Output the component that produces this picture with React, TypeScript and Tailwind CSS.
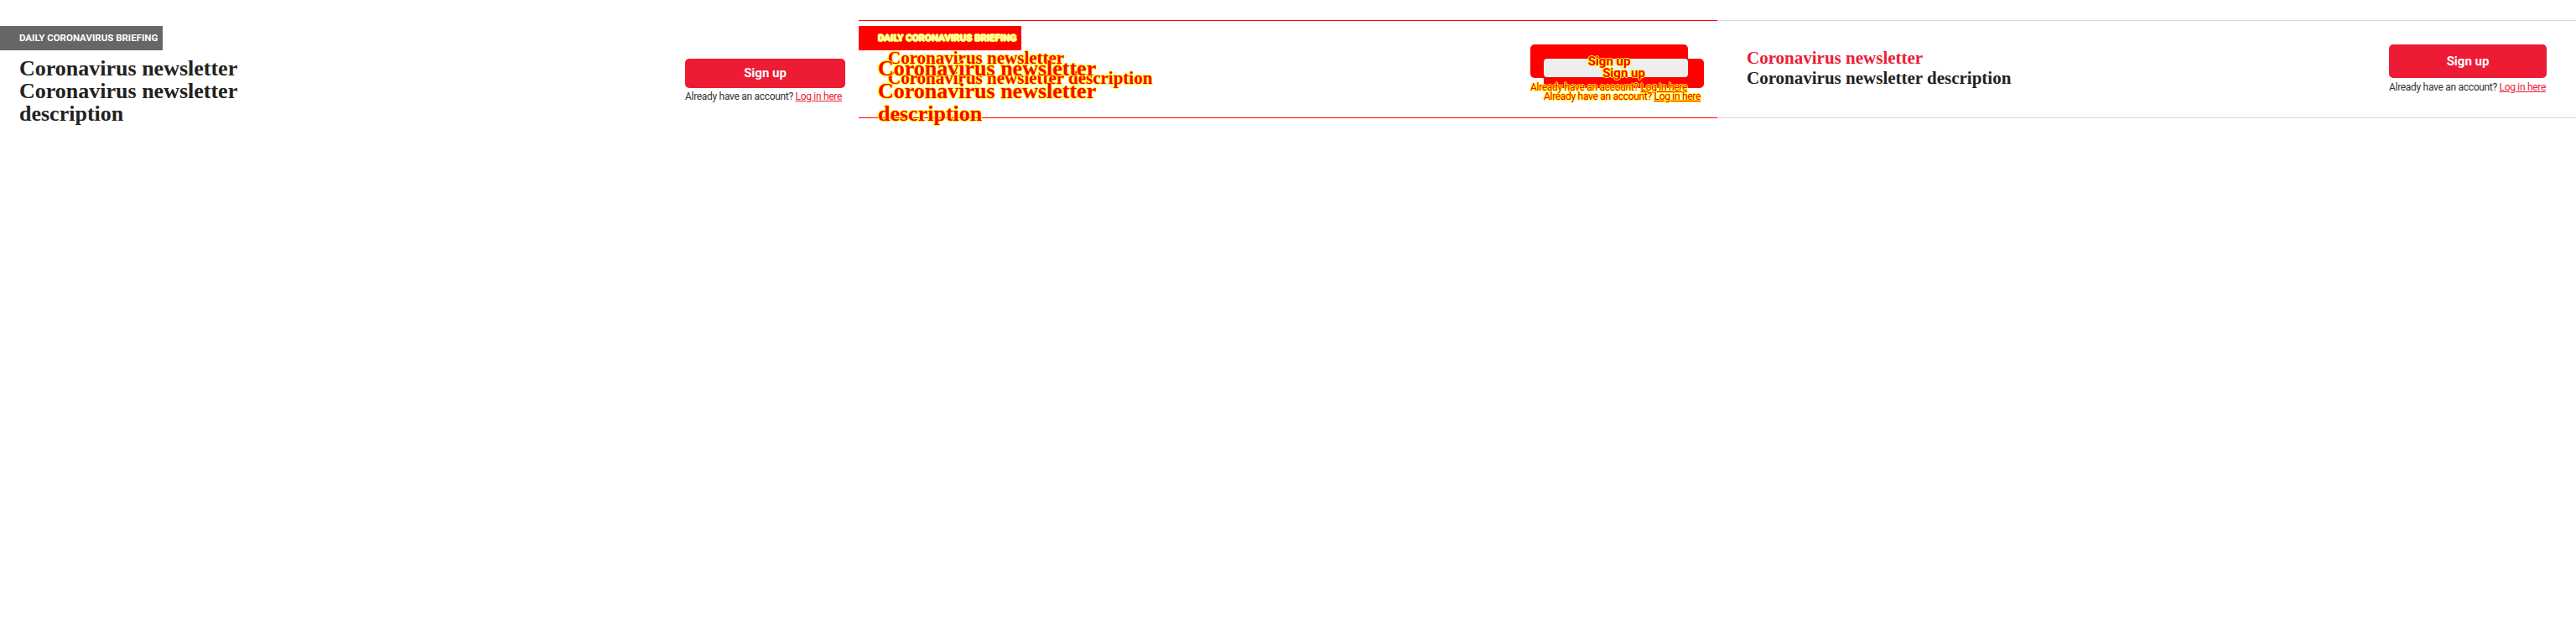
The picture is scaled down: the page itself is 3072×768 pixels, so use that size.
import React from "react";

const SERIF = "font-['Liberation_Serif',serif]";
const SANS = "font-['Roboto',sans-serif]";
const DIFF_TEXT =
  "relative z-10 text-[#ff0000] [text-shadow:1px_0_0_#ffff00,-1px_0_0_#ffff00,0_1px_0_#ffff00,0_-1px_0_#ffff00]";
const DIFF_WHITE_TEXT =
  "relative z-10 text-white [text-shadow:1px_0_0_#ffff00,-1px_0_0_#ffff00,0_1px_0_#ffff00,0_-1px_0_#ffff00]";

function Expected({ diff = false }: { diff?: boolean }) {
  return (
    <div className="w-[1024px]">
      <div
        className={
          "mt-[31px] flex h-[29px] w-[194px] items-center pl-[23px] " +
          (diff ? "bg-[#ff0000]" : "bg-[#666666]")
        }
      >
        <span
          className={
            SANS +
            " whitespace-nowrap text-[11.5px] font-bold uppercase " +
            (diff ? DIFF_WHITE_TEXT : "text-white")
          }
        >
          Daily Coronavirus Briefing
        </span>
      </div>
      <div className="mt-[8px] flex justify-between pl-[23px] pr-[16px]">
        <h2
          className={
            SERIF +
            " max-w-[300px] text-[26px] font-bold leading-[27px] " +
            (diff ? DIFF_TEXT : "text-[#222222]")
          }
        >
          Coronavirus newsletter Coronavirus newsletter description
        </h2>
        <div className="mt-[2px] w-[191px]">
          <div
            className={
              "flex h-[35px] w-full items-center justify-center rounded-[5px] " +
              (diff ? "bg-[#ff0000]" : "bg-[#ed1b33]")
            }
          >
            <span
              className={
                SANS +
                " text-[15px] font-bold " +
                (diff ? DIFF_TEXT : "text-white")
              }
            >
              Sign up
            </span>
          </div>
          <p
            className={
              SANS +
              " mt-[2px] whitespace-nowrap text-[12px] leading-[16px] tracking-[-0.3px] " +
              (diff ? DIFF_TEXT : "text-[#333333]")
            }
          >
            Already have an account?{" "}
            <a className={"underline " + (diff ? "" : "text-[#ed1b33]")}>
              Log in here
            </a>
          </p>
        </div>
      </div>
    </div>
  );
}

function Actual({ diff = false }: { diff?: boolean }) {
  return (
    <div className="w-[1024px]">
      <div
        className={
          "mt-[24px] flex h-[117px] items-center justify-between border-y px-[35px] " +
          (diff ? "border-[#ff0000]" : "border-[#d9d9d9]")
        }
      >
        <div className={SERIF + " mb-[4px] text-[21px] font-bold leading-[24px]"}>
          <h2 className={diff ? DIFF_TEXT : "text-[#ed1b33]"}>
            Coronavirus newsletter
          </h2>
          <p className={diff ? DIFF_TEXT : "text-[#222222]"}>
            Coronavirus newsletter description
          </p>
        </div>
        <div className="w-[188px]">
          <div
            className={
              "flex h-[40px] w-full items-center justify-center rounded-[5px] " +
              (diff ? "bg-[#ff0000]" : "bg-[#ed1b33]")
            }
          >
            <span
              className={
                SANS +
                " text-[15px] font-bold " +
                (diff ? DIFF_TEXT : "text-white")
              }
            >
              Sign up
            </span>
          </div>
          <p
            className={
              SANS +
              " mt-[3px] whitespace-nowrap text-[12px] leading-[16px] tracking-[-0.3px] " +
              (diff ? DIFF_TEXT : "text-[#333333]")
            }
          >
            Already have an account?{" "}
            <a className={"underline " + (diff ? "" : "text-[#ed1b33]")}>
              Log in here
            </a>
          </p>
        </div>
      </div>
    </div>
  );
}

export default function App() {
  return (
    <div className="flex h-[768px] w-[3072px] bg-white">
      <div className="h-[768px] w-[1024px] shrink-0 overflow-hidden">
        <Expected />
      </div>
      <div className="relative h-[768px] w-[1024px] shrink-0 overflow-hidden">
        <div className="absolute inset-0">
          <Actual diff />
        </div>
        <div className="absolute inset-0">
          <Expected diff />
        </div>
        <div className="absolute left-[817px] top-[70px] z-[5] h-[22px] w-[172px] rounded-[4px] bg-[#eeeeee]" />
      </div>
      <div className="h-[768px] w-[1024px] shrink-0 overflow-hidden">
        <Actual />
      </div>
    </div>
  );
}
